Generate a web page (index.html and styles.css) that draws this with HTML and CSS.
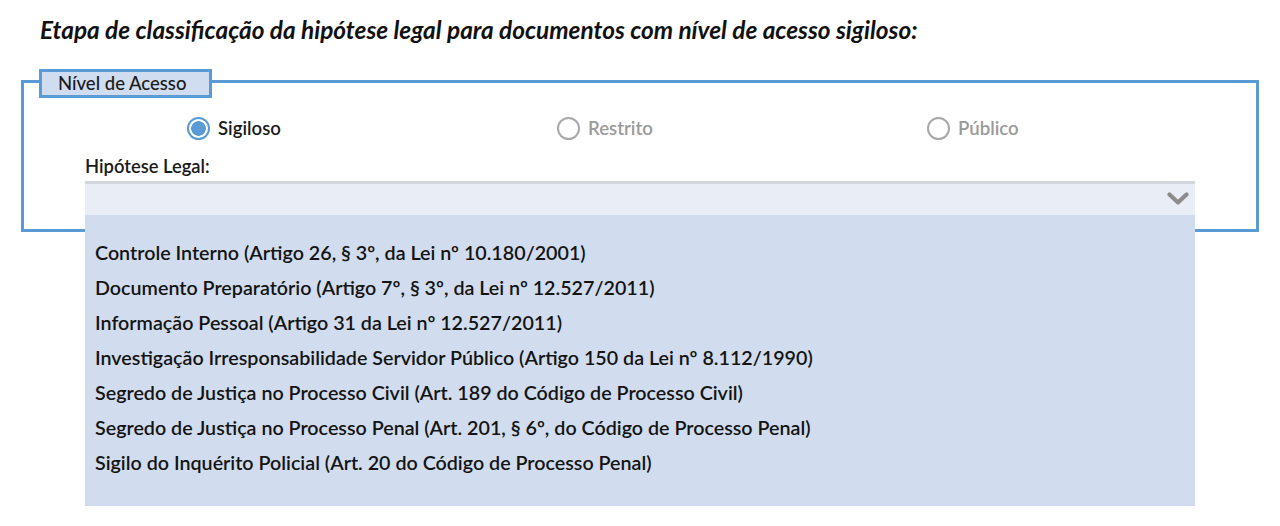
FILE: index.html
```html
<!DOCTYPE html>
<html lang="pt-BR">
<head>
  <meta charset="UTF-8" />
  <meta name="viewport" content="width=device-width, initial-scale=1.0"/>
  <title>Hipótese legal - nível de acesso sigiloso</title>
  <link rel="stylesheet" href="styles.css">
</head>
<body>
  <h1 class="title">Etapa de classificação da hipótese legal para documentos com nível de acesso sigiloso:</h1>

  <div class="access">
    <div class="legend">Nível de Acesso</div>

    <div class="radios">
      <label class="radio checked"><span class="dot"></span>Sigiloso</label>
      <label class="radio"><span class="dot"></span>Restrito</label>
      <label class="radio"><span class="dot"></span>Público</label>
    </div>

    <div class="field-label">Hipótese Legal:</div>
    <div class="select">
      <svg class="chevron" width="22" height="14" viewBox="0 0 22 14">
        <path d="M2.5 2.5 L11 10.5 L19.5 2.5" fill="none" stroke="#8c8c8c" stroke-width="4.2" stroke-linecap="round" stroke-linejoin="round"/>
      </svg>
    </div>
  </div>

  <ul class="options">
    <li>Controle Interno (Artigo 26, § 3º, da Lei nº 10.180/2001)</li>
    <li>Documento Preparatório (Artigo 7º, § 3º, da Lei nº 12.527/2011)</li>
    <li>Informação Pessoal (Artigo 31 da Lei nº 12.527/2011)</li>
    <li>Investigação Irresponsabilidade Servidor Público (Artigo 150 da Lei nº 8.112/1990)</li>
    <li>Segredo de Justiça no Processo Civil (Art. 189 do Código de Processo Civil)</li>
    <li>Segredo de Justiça no Processo Penal (Art. 201, § 6º, do Código de Processo Penal)</li>
    <li>Sigilo do Inquérito Policial (Art. 20 do Código de Processo Penal)</li>
  </ul>
</body>
</html>
```

FILE: styles.css
```css
body {
  font-family: Lato, 'Open Sans', sans-serif;
  background: #fff;
  margin: 0;
  padding: 0;
  color: #1a1a1a;
}

.title {
  margin: 16px 0 0 40px;
  font-size: 24.4px;
  line-height: 28px;
  font-style: italic;
  font-weight: 700;
  color: #111;
}

.access {
  position: relative;
  margin: 36px 21px 0 21px;
  border: 3px solid #5b9bd5;
  padding: 30px 61px 14px 61px;
}

.legend {
  position: absolute;
  top: -14px;
  left: 15px;
  height: 23px;
  padding: 0 23px 0 16px;
  background: #d0dcef;
  border: 3px solid #5b9bd5;
  font-size: 18.5px;
  font-weight: 500;
  line-height: 23px;
  color: #1a1a1a;
}

.radios {
  display: grid;
  grid-template-columns: repeat(3, 370px);
  margin-left: 102px;
  height: 30px;
  align-items: center;
}

.radio {
  display: flex;
  align-items: center;
  gap: 8px;
  font-size: 18.6px;
  font-weight: 600;
  color: #9a9a9a;
}

.radio .dot {
  box-sizing: border-box;
  width: 23px;
  height: 23px;
  border: 2px solid #a8a8a8;
  border-radius: 50%;
  background: #fff;
}

.radio.checked {
  color: #1a1a1a;
}

.radio.checked .dot {
  border-color: #5b9bd5;
  background: radial-gradient(circle, #5b9bd5 0, #5b9bd5 7px, #fff 7.6px);
}

.field-label {
  margin-top: 13px;
  font-size: 18.4px;
  font-weight: 600;
  line-height: 20px;
  color: #1a1a1a;
}

.select {
  position: relative;
  margin-top: 5px;
  height: 31px;
  background: #e8edf6;
  border-top: 3px solid #d3d6dc;
}

.chevron {
  position: absolute;
  right: 6px;
  top: 8px;
}

/* open dropdown, drawn over the bottom of the box */
.options {
  position: relative;
  z-index: 2;
  margin: -17px 85px 0 85px;
  padding: 20px 10px 26px 10px;
  list-style: none;
  background: #d1ddee;
}

.options li {
  font-size: 19.7px;
  font-weight: 600;
  line-height: 35px;
  color: #141414;
}
```
